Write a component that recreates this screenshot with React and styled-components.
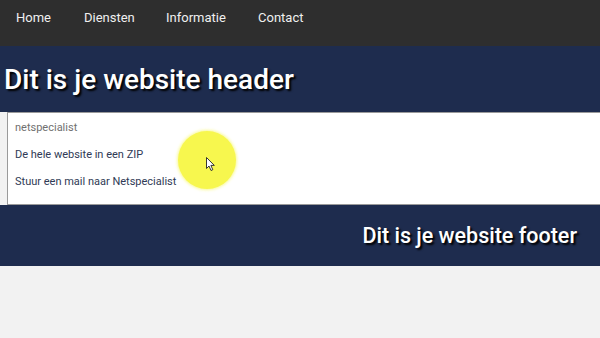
import React from 'react'
import styled, { createGlobalStyle } from 'styled-components'

const Global = createGlobalStyle`
  html, body {
    margin: 0;
    padding: 0;
    background: #f2f2f2;
    font-family: Roboto, "Liberation Sans", sans-serif;
  }
`

const Page = styled.div`
  width: 600px;
  height: 338px;
  display: flex;
  flex-direction: column;
  background: #f2f2f2;
  overflow: hidden;
`

const Nav = styled.nav`
  height: 46px;
  flex-shrink: 0;
  background: #2e2e2e;
  display: flex;
  align-items: flex-start;
  padding: 10px 0 0 16px;
  box-sizing: border-box;
`

const NavItem = styled.a`
  color: #f0f0f0;
  font-size: 13px;
  line-height: 16px;
  text-decoration: none;
  width: ${p => p.$w}px;
`

const Band = styled.div`
  background: #1e2c4e;
  height: ${p => p.$h}px;
  flex-shrink: 0;
  display: flex;
  align-items: center;
  justify-content: ${p => (p.$right ? 'flex-end' : 'flex-start')};
  padding: ${p => (p.$right ? '0 23px 0 0' : '0 0 0 4px')};
  box-sizing: border-box;
`

const BandTitle = styled.h1`
  margin: 0;
  color: #ffffff;
  font-size: ${p => p.$size}px;
  font-weight: 500;
  text-shadow: 2px 2px 2px #000000;
`

const Main = styled.main`
  height: 93px;
  flex-shrink: 0;
  margin-left: 7px;
  background: #ffffff;
  border: 1px solid #9a9a9a;
  border-right: none;
  box-sizing: border-box;
  padding: 8px 0 0 7px;
  display: flex;
  flex-direction: column;
  gap: 13px;
  position: relative;
`

const Brand = styled.div`
  color: #707070;
  font-size: 11px;
  line-height: 14px;
`

const Link = styled.a`
  color: #2f3a55;
  font-size: 11px;
  line-height: 14px;
  text-decoration: none;
`

const Highlight = styled.div`
  position: absolute;
  left: 170px;
  top: 18px;
  width: 58px;
  height: 58px;
  border-radius: 50%;
  background: #f7f74e;
  box-shadow: 0 0 3px 1px rgba(247, 247, 78, 0.6);
  svg {
    position: absolute;
    left: 28px;
    top: 26px;
  }
`

export default function App() {
  return (
    <>
      <Global />
      <Page>
        <Nav>
          <NavItem $w={68}>Home</NavItem>
          <NavItem $w={82}>Diensten</NavItem>
          <NavItem $w={92}>Informatie</NavItem>
          <NavItem $w={80}>Contact</NavItem>
        </Nav>
        <Band $h={66}>
          <BandTitle $size={28}>Dit is je website header</BandTitle>
        </Band>
        <Main>
          <Brand>netspecialist</Brand>
          <Link>De hele website in een ZIP</Link>
          <Link>Stuur een mail naar Netspecialist</Link>
          <Highlight>
            <svg width="10" height="15" viewBox="0 0 10 15">
              <path d="M0.5 0.5 L0.5 11.5 L3 9 L5 13.5 L6.8 12.7 L4.9 8.4 L8.3 8.4 Z" fill="#ffffff" stroke="#222" strokeWidth="0.9" strokeLinejoin="round" />
            </svg>
          </Highlight>
        </Main>
        <Band $h={61} $right>
          <BandTitle $size={21.5}>Dit is je website footer</BandTitle>
        </Band>
      </Page>
    </>
  )
}
